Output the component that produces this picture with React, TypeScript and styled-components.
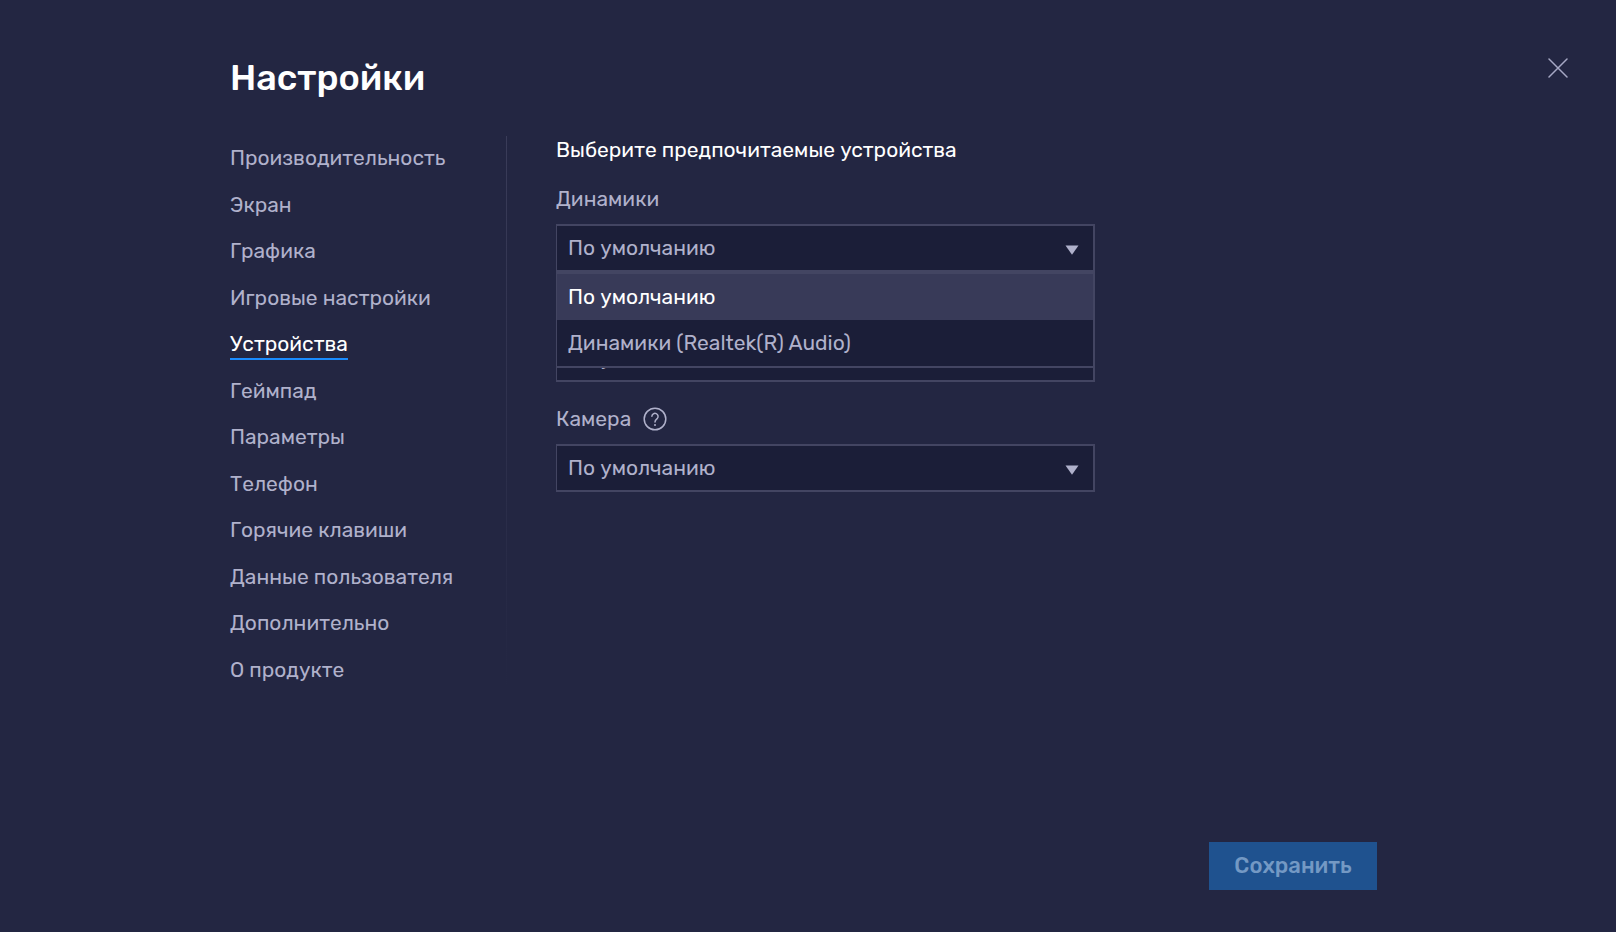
import React, { useState } from "react";
import styled, { createGlobalStyle, css } from "styled-components";

const GlobalStyle = createGlobalStyle`
  *, *::before, *::after { box-sizing: border-box; }
  body {
    margin: 0;
    background: #232642;
    color: #b0b1cb;
    font-family: Rubik, Inter, Roboto, sans-serif;
    font-size: 21px;
    line-height: 24px;
  }
  button, select { font: inherit; }
`;

const Page = styled.div`
  min-height: 100vh;
  display: flex;
  flex-direction: column;
`;

const Header = styled.header`
  display: flex;
  justify-content: space-between;
  align-items: flex-start;
  padding: 56px 48px 0 230px;
`;

const Title = styled.h1`
  margin: 0;
  color: #fff;
  font-size: 36px;
  font-weight: 500;
  line-height: 44px;
`;

const CloseButton = styled.button`
  display: flex;
  padding: 2px 0;
  border: 0;
  background: none;
  color: #a6a8c4;
  cursor: pointer;
`;

const Body = styled.main`
  display: flex;
  align-items: flex-start;
  padding: 36px 48px 0 230px;
`;

const Nav = styled.nav`
  width: 276px;
  flex: none;
  font-kerning: none;
`;

const NavList = styled.ul`
  list-style: none;
  height: 558px;
  margin: 0;
  padding: 0;
  display: flex;
  flex-direction: column;
`;

const NavItem = styled.li`
  flex: 1;
  display: flex;
  align-items: center;
`;

const NavLink = styled.a<{ $active: boolean }>`
  border-bottom: 2px solid transparent;
  line-height: 28px;
  color: inherit;
  text-decoration: none;
  ${(p) =>
    p.$active &&
    css`
      color: #fff;
      border-color: #1a8cff;
    `}
`;

const Divider = styled.div`
  width: 1px;
  flex: none;
  align-self: stretch;
  margin-right: 49px;
  background: linear-gradient(#3a3c59, #232642);
`;

const Panel = styled.section`
  flex: 1;
  max-width: 539px;
`;

const PanelTitle = styled.h2`
  margin: 2px 0 25px;
  color: #fff;
  font-size: inherit;
  font-weight: 400;
`;

const Field = styled.div`
  position: relative;
  margin-bottom: 25px;
`;

const LabelRow = styled.div`
  display: flex;
  align-items: center;
  gap: 12px;
  height: 24px;
  margin-bottom: 13px;
`;

const HelpButton = styled.button`
  display: flex;
  padding: 0;
  border: 0;
  background: none;
  color: inherit;
  cursor: pointer;
`;

const boxBorder = css`
  border: 2px solid #434562;
  border-left-width: 1px;
  background: #1b1e38;
`;

const SelectBox = styled.div`
  display: grid;
  align-items: center;
  height: 48px;
  ${boxBorder}
  > * {
    grid-area: 1 / 1;
  }
`;

const Select = styled.select`
  appearance: none;
  width: 100%;
  height: 100%;
  padding: 0 40px 0 11px;
  border: 0;
  outline: 0;
  background: transparent;
  color: inherit;
`;

const Arrow = styled.svg`
  justify-self: end;
  margin-right: 14px;
  margin-top: 4px;
  pointer-events: none;
`;

const Menu = styled.ul`
  position: absolute;
  z-index: 1;
  top: 100%;
  left: 0;
  right: 0;
  list-style: none;
  margin: 0;
  padding: 0;
  ${boxBorder}
`;

const Option = styled.li<{ $selected: boolean }>`
  padding: 0 11px;
  line-height: 46px;
  cursor: pointer;
  color: ${(p) => (p.$selected ? "#fff" : "inherit")};
  background: ${(p) => (p.$selected ? "#383a58" : "transparent")};
`;

const Footer = styled.footer`
  display: flex;
  justify-content: flex-end;
  margin-top: auto;
  padding: 24px 239px 42px;
`;

const SaveButton = styled.button`
  width: 168px;
  height: 48px;
  padding: 0;
  border: 0;
  background: #1f528f;
  color: #7499c4;
  font-size: 22px;
  font-weight: 500;
`;

const sections = [
  "Производительность",
  "Экран",
  "Графика",
  "Игровые настройки",
  "Устройства",
  "Геймпад",
  "Параметры",
  "Телефон",
  "Горячие клавиши",
  "Данные пользователя",
  "Дополнительно",
  "О продукте",
];

const DEFAULT = "По умолчанию";

type DeviceFieldProps = {
  id: string;
  label: string;
  options: string[];
  help?: boolean;
  open?: boolean;
};

function DeviceField({ id, label, options, help, open }: DeviceFieldProps) {
  const [value, setValue] = useState(options[0]);
  return (
    <Field>
      <LabelRow>
        <label htmlFor={id}>{label}</label>
        {help && (
          <HelpButton type="button" aria-label="Справка">
            <svg width="24" height="24" viewBox="0 0 24 24" fill="none" stroke="currentColor">
              <circle cx="12" cy="12" r="10.8" strokeWidth="1.5" />
              <path d="M8.9 9.3a3.1 3.1 0 1 1 5.2 2.4c-1.3 1-2.1 1.5-2.1 3.3" strokeWidth="1.5" strokeLinecap="round" />
              <circle cx="12" cy="17.9" r="1" fill="currentColor" stroke="none" />
            </svg>
          </HelpButton>
        )}
      </LabelRow>
      <SelectBox>
        <Select id={id} value={value} onChange={(e) => setValue(e.target.value)}>
          {options.map((o) => (
            <option key={o}>{o}</option>
          ))}
        </Select>
        <Arrow width="14" height="10" viewBox="0 0 14 10" aria-hidden="true">
          <path d="M.5.5h13L7 9.7z" fill="#b0b1cb" />
        </Arrow>
      </SelectBox>
      {open && (
        <Menu role="listbox" aria-label={label}>
          {options.map((o) => (
            <Option key={o} role="option" aria-selected={o === value} $selected={o === value} onClick={() => setValue(o)}>
              {o}
            </Option>
          ))}
        </Menu>
      )}
    </Field>
  );
}

export default function App() {
  const [active, setActive] = useState("Устройства");
  return (
    <Page>
      <GlobalStyle />
      <Header>
        <Title>Настройки</Title>
        <CloseButton type="button" aria-label="Закрыть">
          <svg width="20" height="20" viewBox="0 0 20 20" stroke="currentColor" strokeWidth="1.5" strokeLinecap="round">
            <path d="M1 1l18 18M19 1L1 19" />
          </svg>
        </CloseButton>
      </Header>
      <Body>
        <Nav>
          <NavList>
            {sections.map((s) => (
              <NavItem key={s}>
                <NavLink href="#" $active={s === active} onClick={() => setActive(s)}>
                  {s}
                </NavLink>
              </NavItem>
            ))}
          </NavList>
        </Nav>
        <Divider />
        <Panel>
          <PanelTitle>Выберите предпочитаемые устройства</PanelTitle>
          <DeviceField id="speakers" label="Динамики" options={[DEFAULT, "Динамики (Realtek(R) Audio)"]} open />
          <DeviceField id="microphone" label="Микрофон" options={[DEFAULT]} />
          <DeviceField id="camera" label="Камера" options={[DEFAULT]} help />
        </Panel>
      </Body>
      <Footer>
        <SaveButton type="button" disabled>
          Сохранить
        </SaveButton>
      </Footer>
    </Page>
  );
}
